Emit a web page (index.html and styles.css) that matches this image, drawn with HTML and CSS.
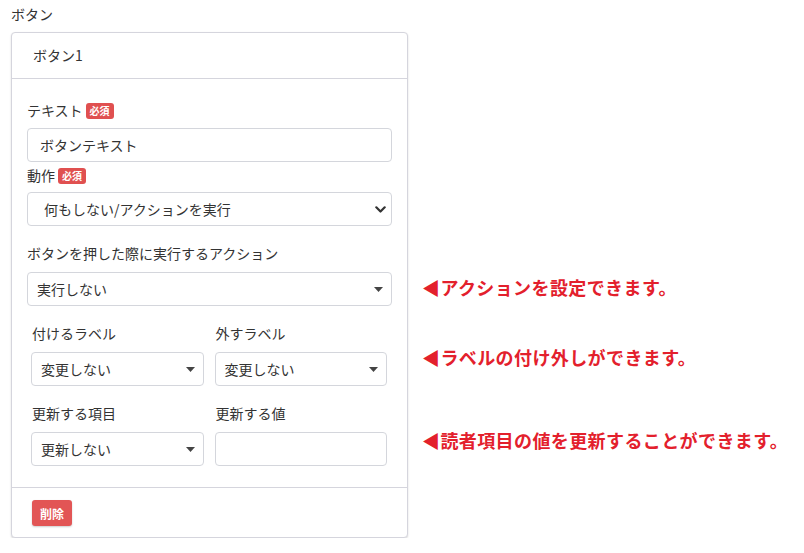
FILE: index.html
```html
<!DOCTYPE html>
<html lang="ja">
<head>
  <meta charset="UTF-8">
  <title>ボタン</title>
  <link rel="stylesheet" href="styles.css">
</head>
<body>
  <div class="page">
    <div class="editor">
      <div class="section-title">ボタン</div>

      <div class="card">
        <div class="card-header">ボタン1</div>

        <div class="card-body">
          <div class="field-label first">テキスト<span class="badge">必須</span></div>
          <div class="control">ボタンテキスト</div>

          <div class="field-label after-input">動作<span class="badge">必須</span></div>
          <div class="control select native">
            <span>何もしない/アクションを実行</span>
            <svg width="11" height="7" viewBox="0 0 11 7"><path d="M1.3 1.3 L5.5 5.5 L9.7 1.3" fill="none" stroke="#333" stroke-width="2.2" stroke-linecap="round" stroke-linejoin="round"/></svg>
          </div>

          <div class="field-label spaced">ボタンを押した際に実行するアクション</div>
          <div class="control select plain">
            <span>実行しない</span>
            <svg width="9" height="5" viewBox="0 0 9 5"><path d="M0 0 H9 L4.5 5 Z" fill="#444"/></svg>
          </div>

          <div class="form-row">
            <div class="col">
              <div class="field-label">付けるラベル</div>
              <div class="control select plain">
                <span>変更しない</span>
                <svg width="9" height="5" viewBox="0 0 9 5"><path d="M0 0 H9 L4.5 5 Z" fill="#444"/></svg>
              </div>
            </div>
            <div class="col">
              <div class="field-label">外すラベル</div>
              <div class="control select plain">
                <span>変更しない</span>
                <svg width="9" height="5" viewBox="0 0 9 5"><path d="M0 0 H9 L4.5 5 Z" fill="#444"/></svg>
              </div>
            </div>
          </div>

          <div class="form-row">
            <div class="col">
              <div class="field-label">更新する項目</div>
              <div class="control select plain">
                <span>更新しない</span>
                <svg width="9" height="5" viewBox="0 0 9 5"><path d="M0 0 H9 L4.5 5 Z" fill="#444"/></svg>
              </div>
            </div>
            <div class="col">
              <div class="field-label">更新する値</div>
              <div class="control"></div>
            </div>
          </div>
        </div>

        <div class="card-footer">
          <button class="btn-delete">削除</button>
        </div>
      </div>
    </div>

    <!-- 説明 -->
    <div class="notes">
      <div class="note n1">◀アクションを設定できます。</div>
      <div class="note n2">◀ラベルの付け外しができます。</div>
      <div class="note n3">◀読者項目の値を更新することができます。</div>
    </div>
  </div>
</body>
</html>
```

FILE: styles.css
```css
body {
  margin: 0;
  padding: 4px 0 0 11px;
  background: #fff;
  color: #333;
  font-family: "Noto Sans CJK JP", "Noto Sans", sans-serif;
  font-size: 14px;
}
.page {
  display: flex;
  align-items: flex-start;
  gap: 14px;
}
.editor {
  width: 397px;
}
.section-title {
  line-height: 20px;
  margin-bottom: 8px;
}
/* カード */
.card {
  border: 1px solid #d5d5dd;
  border-radius: 4px;
  box-shadow: 0 1px 2px rgba(0, 0, 0, 0.15);
  background: #fff;
}
.card-header {
  height: 45px;
  line-height: 45px;
  padding-left: 21px;
  border-bottom: 1px solid #d5d5dd;
}
.card-body {
  padding: 21px 15px 21px 15px;
}
.field-label {
  line-height: 21px;
  margin-bottom: 8px;
}
.field-label.first {
  margin-bottom: 7px;
}
.field-label.after-input {
  margin-top: 3px;
  margin-bottom: 6px;
}
.field-label.spaced {
  margin-top: 17px;
}
.badge {
  display: inline-block;
  margin-left: 3px;
  padding: 0 4px;
  height: 16px;
  line-height: 16px;
  font-size: 10px;
  font-weight: bold;
  color: #fff;
  background: #e05050;
  border-radius: 3px;
  vertical-align: 1px;
}
.control {
  box-sizing: border-box;
  height: 34px;
  border: 1px solid #d4d6dc;
  border-radius: 4px;
  padding: 0 12px;
  line-height: 32px;
  background: #fff;
}
.select {
  display: flex;
  align-items: center;
  justify-content: space-between;
}
.select.native {
  padding: 0 5px 0 16px;
}
.select.plain {
  padding: 0 8px 0 9px;
}
.form-row {
  display: grid;
  grid-template-columns: 1fr 1fr;
  gap: 11px;
  padding: 0 5px 0 4px;
  margin-top: 17px;
}
.form-row .field-label {
  padding-left: 1px;
}
.card-footer {
  border-top: 1px solid #d5d5dd;
  padding: 12px 20px 11px;
}
.btn-delete {
  height: 26px;
  padding: 0 8px;
  border: none;
  border-radius: 3px;
  background: #e25555;
  color: #fff;
  font-family: inherit;
  font-size: 12px;
  font-weight: bold;
  box-shadow: 0 1px 2px rgba(0, 0, 0, 0.2);
}
/* 説明 */
.notes {
  padding-top: 271px;
}
.note {
  line-height: 24px;
  font-size: 18px;
  font-weight: bold;
  letter-spacing: 0.4px;
  color: #e3202c;
  white-space: nowrap;
}
.n2 {
  margin-top: 46px;
}
.n3 {
  margin-top: 59px;
}
```
